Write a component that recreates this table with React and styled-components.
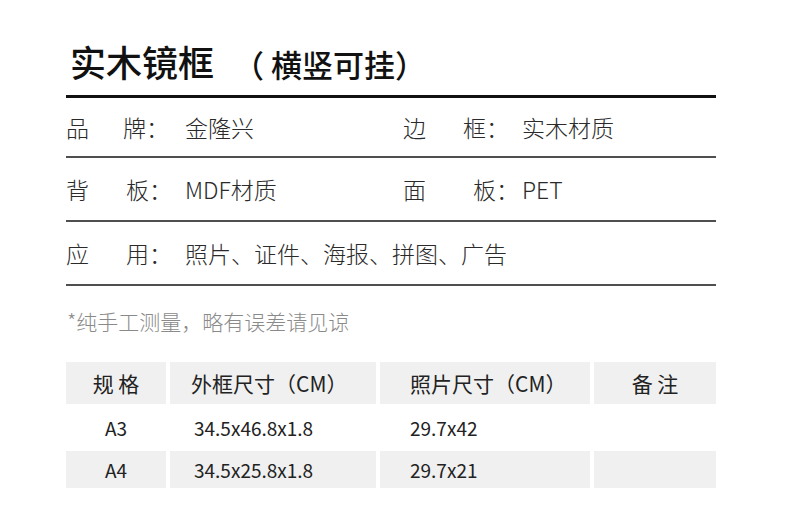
import React from 'react'
import styled, { createGlobalStyle } from 'styled-components'

const GlobalStyle = createGlobalStyle`
  html, body {
    margin: 0;
    padding: 0;
    background: #ffffff;
  }
  body {
    font-family: "Noto Sans CJK SC", "Noto Sans", sans-serif;
    color: #222;
  }
`

const info = [
  [
    { a: '品', b: '牌', gap: 57, value: '金隆兴' },
    { a: '边', b: '框', gap: 60, value: '实木材质' },
  ],
  [
    { a: '背', b: '板', gap: 60, value: 'MDF材质' },
    { a: '面', b: '板', gap: 70, value: 'PET' },
  ],
  [{ a: '应', b: '用', gap: 60, value: '照片、证件、海报、拼图、广告' }],
]

const sizes = [
  { name: 'A3', frame: '34.5x46.8x1.8', photo: '29.7x42', shade: false, h: 39 },
  { name: 'A4', frame: '34.5x25.8x1.8', photo: '29.7x21', shade: true, h: 37 },
]

function App() {
  return (
    <>
      <GlobalStyle />
      <Page>
        <Title>
          实木镜框<Sub>（ 横竖可挂）</Sub>
        </Title>

        {info.map((row, i) => (
          <InfoRow key={i} $h={i === 0 ? 60 : 64}>
            {row.map((f) => (
              <Field key={f.a + f.b}>
                <Key>
                  <KeyFirst $gap={f.gap}>{f.a}</KeyFirst>
                  <span>{f.b}：</span>
                </Key>
                <Value>{f.value}</Value>
              </Field>
            ))}
          </InfoRow>
        ))}

        <Note>*纯手工测量，略有误差请见谅</Note>

        <Table>
          <Cell $shade $h={42} $center $head>规 格</Cell>
          <Cell $shade $h={42} $pad={21} $head>外框尺寸（CM）</Cell>
          <Cell $shade $h={42} $pad={30} $head>照片尺寸（CM）</Cell>
          <Cell $shade $h={42} $center $head>备 注</Cell>
          {sizes.map((s) => (
            <React.Fragment key={s.name}>
              <Cell $shade={s.shade} $h={s.h} $center>{s.name}</Cell>
              <Cell $shade={s.shade} $h={s.h} $pad={24}>{s.frame}</Cell>
              <Cell $shade={s.shade} $h={s.h} $pad={30}>{s.photo}</Cell>
              <Cell $shade={s.shade} $h={s.h} />
            </React.Fragment>
          ))}
        </Table>
      </Page>
    </>
  )
}

export default App

const Page = styled.div`
  width: 650px;
  padding: 39px 0 0 66px;
`

const Title = styled.div`
  height: 44px;
  line-height: 44px;
  padding: 0 0 12px 4px;
  font-size: 36px;
  font-weight: 500;
  color: #111;
  border-bottom: 3px solid #111;
  white-space: nowrap;
`

const Sub = styled.span`
  font-size: 31px;
  margin-left: 19px;
`

const InfoRow = styled.div`
  display: flex;
  align-items: center;
  height: ${(p) => p.$h}px;
  box-sizing: border-box;
  border-bottom: 2px solid #4f4f4f;
  font-size: 23px;
  font-weight: 300;
  color: #2a2a2a;
`

const Field = styled.div`
  display: flex;
  align-items: center;
  flex: none;
  width: 337px;
`

const Key = styled.div`
  display: flex;
  flex: none;
  width: 119px;
`

const KeyFirst = styled.span`
  width: ${(p) => p.$gap}px;
`

const Value = styled.span`
  white-space: nowrap;
`

const Note = styled.div`
  margin-top: 22px;
  line-height: 26px;
  font-size: 21px;
  font-weight: 300;
  color: #8a8a8a;
  padding-left: 1px;
`

const Table = styled.div`
  display: grid;
  grid-template-columns: 100px 206px 210px 122px;
  gap: 4px;
  margin-top: 28px;
`

const Cell = styled.div`
  height: ${(p) => p.$h}px;
  display: flex;
  align-items: center;
  justify-content: ${(p) => (p.$center ? 'center' : 'flex-start')};
  padding-left: ${(p) => p.$pad || 0}px;
  background: ${(p) => (p.$shade ? '#f0f0f0' : 'transparent')};
  font-size: ${(p) => (p.$head ? 21 : 19)}px;
  color: #222;
  white-space: pre;
`
